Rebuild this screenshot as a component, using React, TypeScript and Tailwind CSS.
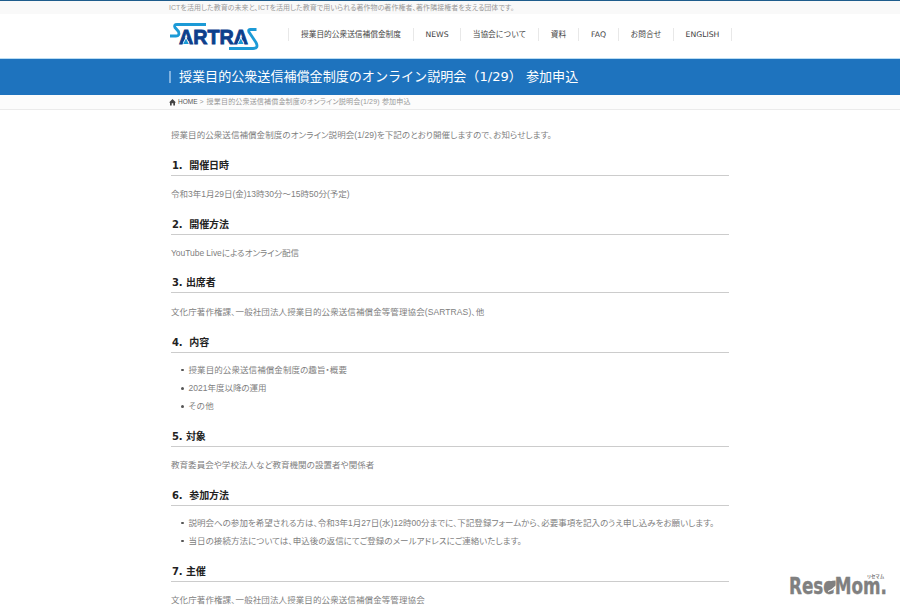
import type { ReactNode } from 'react'
import clsx from 'clsx'

const GOTHIC = "font-['Liberation_Sans','Noto_Sans_CJK_JP',sans-serif] [font-feature-settings:'palt']"
const MEIRYO = "font-['DejaVu_Sans','Noto_Sans_CJK_JP',sans-serif] [font-feature-settings:normal]"

const NAV = [
  { label: '授業目的公衆送信補償金制度', width: 'w-[125px]' },
  { label: 'NEWS', width: 'w-[47px]' },
  { label: '当協会について', width: 'w-[78px]' },
  { label: '資料', width: 'w-[40px]' },
  { label: 'FAQ', width: 'w-[40px]' },
  { label: 'お問合せ', width: 'w-[55px]' },
  { label: 'ENGLISH', width: 'w-[58px]' },
]

function Logo() {
  return (
    <svg width="90" height="30" viewBox="0 0 90 30" className="block" aria-label="SARTRAS">
      <g fill="none" stroke="#1c9ad6" strokeWidth="2.800" strokeLinejoin="round">
        <path d="M37 2.500H8Q4.500 2.500 6 5.500L9.500 9.500Q11 14 7 14H1" />
        <path d="M87.500 7.500H81Q79 7.500 80 10L87 20.500Q90 26.500 84 26.500H60" />
      </g>
      <text
        x="10"
        y="21.500"
        textLength="69"
        lengthAdjust="spacingAndGlyphs"
        fill="#0d3f8c"
        stroke="#0d3f8c"
        strokeWidth="0.900"
        fontSize="21"
        fontWeight="700"
        fontFamily="Liberation Sans, sans-serif"
      >
        ARTRA
      </text>
      {/* light wedges inside the first and last A */}
      <path d="M17 14L20.500 22.400H13.500zM71.800 14L75.300 22.400H68.300z" fill="#fff" />
      <path d="M17 16.500L19.800 22H14.200zM71.800 16.500L74.600 22H69z" fill="#1c9ad6" />
    </svg>
  )
}

function Section({ title, gap = 'mb-3', children }: { title: string; gap?: string; children: ReactNode }) {
  return (
    <section className={gap}>
      <h2
        className={clsx(
          MEIRYO,
          'h-5 border-b border-[#cccccc] pt-px pl-px text-[10px] leading-[18px] font-bold tracking-[-0.100px] whitespace-pre text-[#222]',
        )}
      >
        {title}
      </h2>
      {children}
    </section>
  )
}

function Line({ className, children }: { className?: string; children: ReactNode }) {
  return <p className={clsx('mt-[9px] h-[18px] leading-[18px] whitespace-nowrap', className)}>{children}</p>
}

function Item({ className, children }: { className?: string; children: ReactNode }) {
  return (
    <li className="flex h-[18.2px] items-center whitespace-nowrap">
      <span className="mr-[5px] ml-[10px] size-[2.500px] rounded-full bg-[#555]" />
      <span className={className}>{children}</span>
    </li>
  )
}

function Watermark() {
  return (
    <svg
      width="108"
      height="38"
      viewBox="0 0 108 38"
      className="absolute top-[570px] left-[788px]"
      fill="#808080"
      fontFamily="DejaVu Sans, sans-serif"
      fontWeight="700"
    >
      <text
        x="1"
        y="23.500"
        textLength="98"
        lengthAdjust="spacingAndGlyphs"
        fontSize="23.500"
        stroke="#808080"
        strokeWidth="0.400"
      >
        ReseMom.
      </text>
      {/* leaf over the second e */}
      <path d="M37.500 22Q34 11 47.500 10.500Q49 21 39 22.500Z" />
      <path d="M40 21.500Q44 20.500 47.500 16.500" stroke="#fff" strokeWidth="1.200" fill="none" />
      <text x="79" y="8.300" textLength="17" fontSize="4.500" fontFamily="Noto Sans CJK JP, sans-serif">
        リセマム
      </text>
    </svg>
  )
}

export default function App() {
  return (
    <div className={clsx(GOTHIC, 'relative h-[608px] w-[900px] overflow-hidden bg-white text-[8.500px] text-[#808080]')}>
      <div className="h-[14px] border-t border-[#1e5c8c] bg-[#f9f9f9] pl-[169px] text-[7px] leading-[13px] tracking-[0.040px] whitespace-nowrap text-[#999]">
        ICTを活用した教育の未来と、ICTを活用した教育で用いられる著作物の著作権者、著作隣接権者を支える団体です。
      </div>

      <header className="flex h-[45px] border-b border-[#b9dcf3] pl-[169px]">
        <div className="mt-[8px] w-[119px]">
          <Logo />
        </div>
        <nav className={clsx(MEIRYO, 'mt-[14px] flex h-[13px] border-l border-[#e8e8e8] text-[7.700px] text-[#444]')}>
          {NAV.map((item) => (
            <a
              key={item.label}
              className={clsx('flex items-center justify-center border-r border-[#e8e8e8] whitespace-nowrap', item.width)}
            >
              {item.label}
            </a>
          ))}
        </nav>
      </header>

      <div className="flex h-9 items-center bg-[#1e73be] pl-[169px]">
        <span className="mr-[8px] h-[12px] w-[2px] bg-[#7fb2e0]" />
        <h1 className={clsx(MEIRYO, 'text-[13.070px] leading-none whitespace-pre text-white')}>
          授業目的公衆送信補償金制度のオンライン説明会（1/29） 参加申込
        </h1>
      </div>

      <div className="flex h-[15px] items-center border-b border-[#ebebeb] bg-[#fcfcfc] pl-[169px] text-[7px] whitespace-nowrap text-[#999]">
        <svg width="7" height="7" viewBox="0 0 7 7" className="mr-[2px]">
          <path d="M3.500 0L7 3.500H6V6.500H4.300V4.300H2.700V6.500H1V3.500H0Z" fill="#444" />
        </svg>
        <span className="text-[6.500px] text-[#555]">HOME</span>
        <span className="mr-[3px] ml-[2px]">&gt;</span>
        <span className="tracking-[0.180px]">授業目的公衆送信補償金制度のオンライン説明会(1/29) 参加申込</span>
      </div>

      <main className="ml-[171px] w-[558px] pt-4">
        <p className="mb-3 h-[18px] leading-[18px] tracking-[0.060px] whitespace-nowrap">
          授業目的公衆送信補償金制度のオンライン説明会(1/29)を下記のとおり開催しますので、お知らせします。
        </p>
        <Section title="1.  開催日時">
          <Line>令和3年1月29日(金)13時30分～15時50分(予定)</Line>
        </Section>
        <Section title="2.  開催方法" gap="mb-[11px]">
          <Line className="tracking-[-0.050px]">YouTube Liveによるオンライン配信</Line>
        </Section>
        <Section title="3. 出席者" gap="mb-[13px]">
          <Line className="pt-px tracking-[0.100px]">
            文化庁著作権課、一般社団法人授業目的公衆送信補償金等管理協会(SARTRAS)、他
          </Line>
        </Section>
        <Section title="4.  内容" gap="mb-[11.400px]">
          <ul className="mt-[8px]">
            <Item className="tracking-[0.080px]">授業目的公衆送信補償金制度の趣旨・概要</Item>
            <Item>2021年度以降の運用</Item>
            <Item className="tracking-[0.500px]">その他</Item>
          </ul>
        </Section>
        <Section title="5. 対象">
          <Line className="tracking-[0.060px]">教育委員会や学校法人など教育機関の設置者や関係者</Line>
        </Section>
        <Section title="6.  参加方法" gap="mb-[11.600px]">
          <ul className="mt-[8px]">
            <Item className="tracking-[0.010px]">
              説明会への参加を希望される方は、令和3年1月27日(水)12時00分までに、下記登録フォームから、必要事項を記入のうえ申し込みをお願いします。
            </Item>
            <Item className="tracking-[0.050px]">
              当日の接続方法については、申込後の返信にてご登録のメールアドレスにご連絡いたします。
            </Item>
          </ul>
        </Section>
        <Section title="7. 主催">
          <Line className="tracking-[0.100px]">文化庁著作権課、一般社団法人授業目的公衆送信補償金等管理協会</Line>
        </Section>
      </main>

      <Watermark />
    </div>
  )
}
